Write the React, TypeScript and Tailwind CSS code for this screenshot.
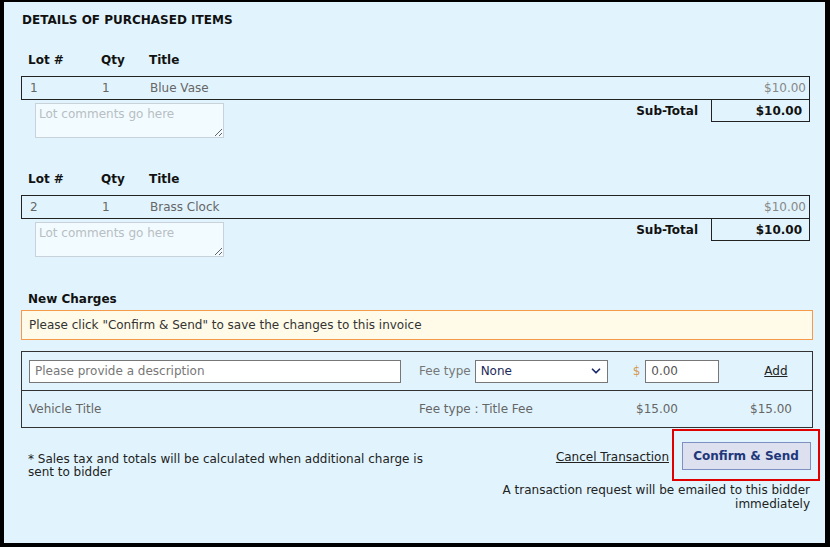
import { ChevronDown } from 'lucide-react';

const items = [
  { lot: '1', qty: '1', title: 'Blue Vase', price: '$10.00' },
  { lot: '2', qty: '1', title: 'Brass Clock', price: '$10.00' },
];

function ItemBlock({ lot, qty, title, price }: { lot: string; qty: string; title: string; price: string }) {
  return (
    <div className="mr-[3px]">
      <div className="grid grid-cols-[73px_48px_1fr] pl-[7px] h-[20px] items-center font-bold text-[12px] text-[#111]">
        <span>Lot #</span>
        <span>Qty</span>
        <span>Title</span>
      </div>
      <div className="mt-[6px] h-[24px] border border-[#222] grid grid-cols-[72px_48px_1fr_auto] items-center pl-[8px] pr-[3px] text-[#666]">
        <span>{lot}</span>
        <span>{qty}</span>
        <span>{title}</span>
        <span className="text-[#888]">{price}</span>
      </div>
      <div className="flex items-start">
        <div className="pl-[14px] pt-[3px]">
          <textarea
            placeholder="Lot comments go here"
            className="block w-[189px] h-[35px] resize-y border border-[#c8d2d8] bg-[#f2fbff] px-[3px] pt-[3px] text-[12px] leading-[14px] placeholder:text-[#b8bec2] outline-none"
          />
        </div>
        <div className="flex-1 flex justify-end items-start">
          <span className="h-[22px] flex items-center font-bold pr-[13px] text-[#111]">Sub-Total</span>
          <span className="w-[99px] h-[22px] border-x border-b border-[#222] flex items-center justify-end pr-[7px] font-bold text-[#111]">
            {price}
          </span>
        </div>
      </div>
    </div>
  );
}

export default function App() {
  return (
    <div
      className="w-[830px] h-[547px] bg-[#e1f4fd] border-l-4 border-t-2 border-r-[5px] border-b-4 border-black text-[12px] text-[#222] overflow-hidden"
      style={{ fontFamily: '"DejaVu Sans", Verdana, sans-serif' }}
    >
      <div className="pl-[17px] pr-[12px] pt-[11px]">
        <div className="font-bold text-[12px] text-[#111] h-[14px] flex items-center pl-[1px]">DETAILS OF PURCHASED ITEMS</div>

        <div className="mt-[23px]">
          <ItemBlock {...items[0]} />
        </div>
        <div className="mt-[31px]">
          <ItemBlock {...items[1]} />
        </div>

        <div className="mt-[34px] pl-[7px] font-bold text-[12px] text-[#111] h-[16px] flex items-center">New Charges</div>
        <div className="mt-[3px] h-[30px] border border-[#f59a4a] bg-[#fffbe8] flex items-center pl-[7px] text-[#333]">
          Please click "Confirm &amp; Send" to save the changes to this invoice
        </div>

        <div className="mt-[11px] border border-[#333]">
          <div className="h-[39px] flex items-center pl-[7px] border-b border-[#333]">
            <input
              placeholder="Please provide a description"
              className="w-[372px] h-[23px] border border-[#777] bg-white px-[5px] text-[12px] placeholder:text-[#777] outline-none"
            />
            <span className="ml-[18px] text-[#777]">Fee type</span>
            <div className="ml-[4px] w-[133px] h-[23px] border border-[#777] bg-white flex items-center justify-between pl-[5px] pr-[4px] text-[#1b2a5a]">
              <span>None</span>
              <ChevronDown className="w-[14px] h-[14px] text-[#1b2a6a]" strokeWidth={3} />
            </div>
            <span className="ml-[25px] text-[#d49a55]">$</span>
            <input
              defaultValue="0.00"
              className="ml-[5px] w-[74px] h-[23px] border border-[#777] bg-white px-[5px] text-[12px] text-[#555] outline-none"
            />
            <span className="ml-[45px] underline text-[#222]">Add</span>
          </div>
          <div className="h-[36px] flex items-center pl-[7px] text-[#666]">
            <span className="w-[390px]">Vehicle Title</span>
            <span className="w-[217px]">Fee type : Title Fee</span>
            <span className="w-[114px]">$15.00</span>
            <span>$15.00</span>
          </div>
        </div>

        <div className="mt-[1px] flex items-start justify-between">
          <p className="pl-[7px] pt-[24px] w-[425px] leading-[13px] text-[#222]">
            * Sales tax and totals will be calculated when additional charge is sent to bidder
          </p>
          <div className="flex flex-col items-end mr-[-7px]">
            <div className="flex items-center">
              <span className="underline text-[#222] mr-[3px] pt-[3px]">Cancel Transaction</span>
              <div className="border-2 border-[#e00000] w-[148px] h-[52px] flex items-center justify-center">
                <button className="w-[129px] h-[28px] mt-[1px] bg-[#dde0ef] border border-[#7f8fc2] font-bold text-[12px] text-[#20377a]">
                  Confirm &amp; Send
                </button>
              </div>
            </div>
            <p className="mt-[2px] text-right leading-[14px] w-[340px] pr-[10px] text-[#222]">
              A transaction request will be emailed to this bidder immediately
            </p>
          </div>
        </div>
      </div>
    </div>
  );
}
